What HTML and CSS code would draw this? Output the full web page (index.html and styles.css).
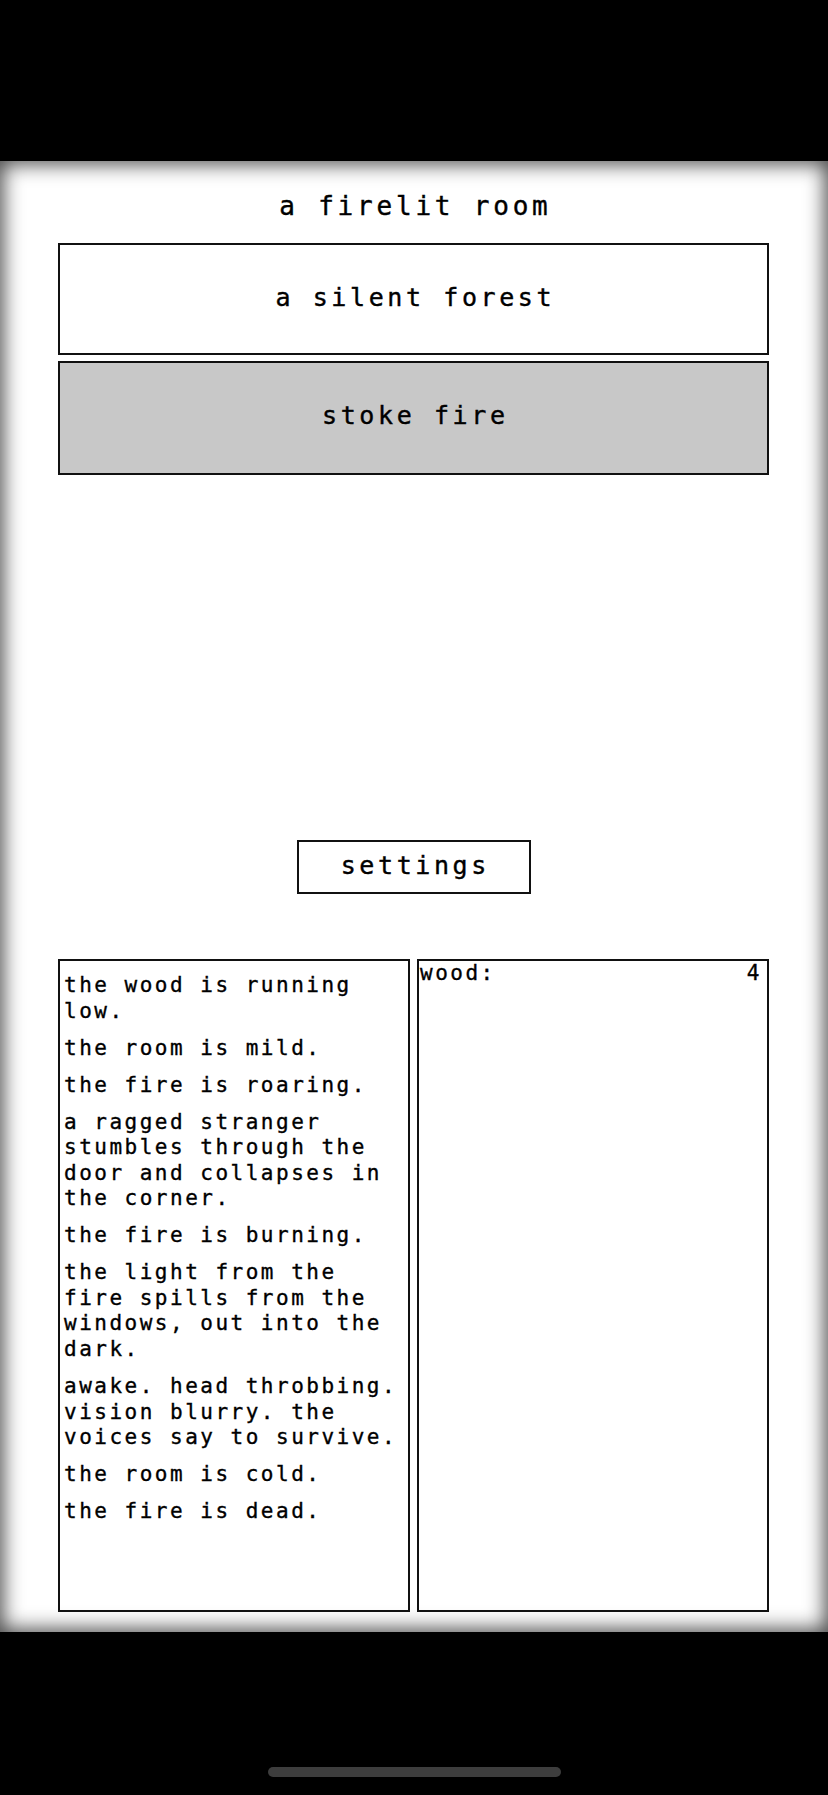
FILE: index.html
```html
<!DOCTYPE html>
<html lang="en">
<head>
<meta charset="utf-8">
<title>A Dark Room</title>
<link rel="stylesheet" href="styles.css">
</head>
<body>
<div class="device">
  <div class="status-area"></div>
  <main class="game">
    <h1 class="location">a firelit room</h1>
    <div class="actions">
      <div class="btn btn-nav">a silent forest</div>
      <div class="btn btn-action">stoke fire</div>
    </div>
    <div class="settings-row">
      <div class="btn btn-settings">settings</div>
    </div>
    <div class="panels">
      <div class="log">
        <p>the wood is running low.</p>
        <p>the room is mild.</p>
        <p>the fire is roaring.</p>
        <p>a ragged stranger stumbles through the door and collapses in the corner.</p>
        <p>the fire is burning.</p>
        <p>the light from the fire spills from the windows, out into the dark.</p>
        <p>awake. head throbbing. vision blurry. the voices say to survive.</p>
        <p>the room is cold.</p>
        <p>the fire is dead.</p>
      </div>
      <div class="stores">
        <div class="store-row"><span class="store-name">wood:</span><span class="store-val">4</span></div>
      </div>
    </div>
  </main>
  <div class="home-area"><div class="home-indicator"></div></div>
</div>
</body>
</html>
```

FILE: styles.css
```css
html, body {
  margin: 0;
  padding: 0;
  background: #000;
}

body {
  font-family: "DejaVu Sans Mono", "Liberation Mono", monospace;
  color: #000;
}

.device {
  width: 828px;
  height: 1795px;
  display: flex;
  flex-direction: column;
  background: #000;
}

.status-area {
  height: 161px;
  flex: none;
}

.game {
  height: 1471px;
  flex: none;
  box-sizing: border-box;
  background: #fff;
  box-shadow: inset 0 0 20px 3px rgba(0, 0, 0, 0.72);
  padding: 0 59px 0 58px;
  display: flex;
  flex-direction: column;
}

.location {
  margin: 30px 0 0;
  font-size: 26px;
  font-weight: normal;
  letter-spacing: 3.8px;
  line-height: 30px;
  height: 30px;
  text-align: center;
  padding-left: 3.8px;
  -webkit-text-stroke: 0.4px #000;
}

.actions {
  margin-top: 21.5px;
  display: flex;
  flex-direction: column;
  gap: 6px;
}

.btn {
  box-sizing: border-box;
  border: 2px solid #111;
  display: flex;
  align-items: center;
  justify-content: center;
  font-size: 25px;
  letter-spacing: 3.6px;
  padding-left: 3.6px;
  -webkit-text-stroke: 0.4px #000;
}

.btn-nav {
  height: 112.5px;
  background: #fff;
  padding-bottom: 2px;
}

.btn-action {
  height: 114px;
  background: #c8c8c8;
  padding-bottom: 6px;
}

.settings-row {
  margin-top: 365px;
  display: flex;
  justify-content: center;
}

.btn-settings {
  width: 234px;
  height: 53.5px;
  background: #fff;
  padding-bottom: 2px;
}

.panels {
  margin-top: 65.5px;
  height: 653px;
  display: grid;
  grid-template-columns: 352px 352px;
  column-gap: 7px;
}

.log, .stores {
  box-sizing: border-box;
  border: 2px solid #111;
  font-size: 21px;
  letter-spacing: 2.5px;
  line-height: 25.6px;
  -webkit-text-stroke: 0.35px #000;
}

.log {
  padding: 12px 4px 0 4px;
}

.log p {
  margin: 0 0 11.4px;
}

.stores {
  padding: 0 5px 0 1px;
}

.store-row {
  display: flex;
  justify-content: space-between;
}

.home-area {
  flex: 1;
  display: flex;
  justify-content: center;
  padding-top: 135px;
  box-sizing: border-box;
}

.home-indicator {
  width: 293px;
  height: 10px;
  border-radius: 5px;
  background: #3d3d3d;
}
```
